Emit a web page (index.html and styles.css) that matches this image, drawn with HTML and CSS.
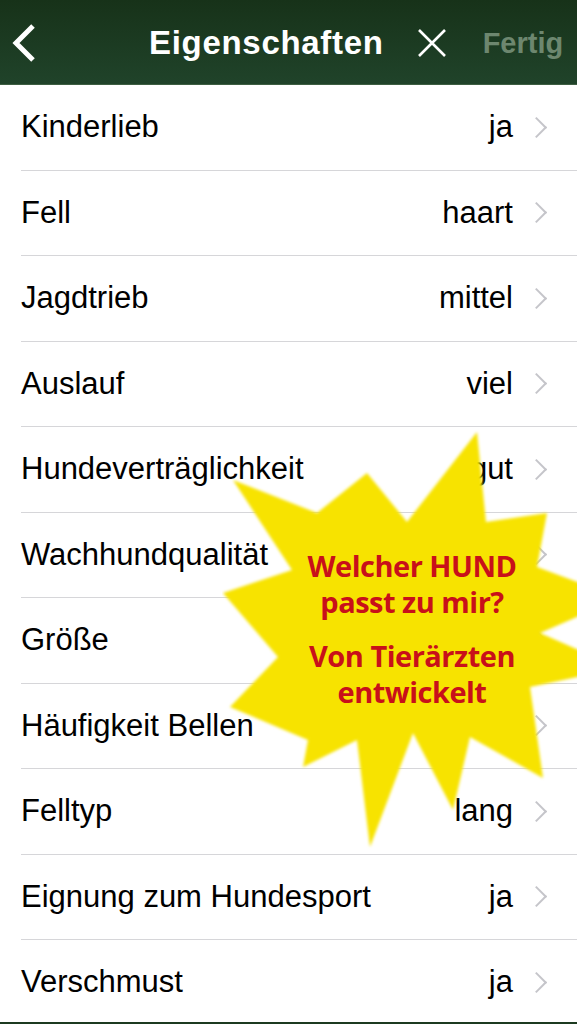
FILE: index.html
```
<!DOCTYPE html>
<html lang="de">
<head>
    <meta charset="UTF-8">
    <meta name="viewport" content="width=device-width, initial-scale=1.0">
    <title>Eigenschaften</title>
    <link rel="stylesheet" href="styles.css">
</head>
<body>
    <div class="wrap">
        <div class="nav">
            <svg class="back" width="26" height="40" viewBox="0 0 26 40">
                <polyline points="21,3 4,20 21,37" fill="none" stroke="#fff" stroke-width="5"/>
            </svg>
            <div class="title">Eigenschaften</div>
            <svg class="close" width="30" height="30" viewBox="0 0 30 30">
                <path d="M2 2 L28 28 M28 2 L2 28" stroke="#fff" stroke-width="2.6"/>
            </svg>
            <div class="done">Fertig</div>
        </div>
        <ul class="list">
            <li><span class="label">Kinderlieb</span><span class="value">ja</span><i class="arrow"></i></li>
            <li><span class="label">Fell</span><span class="value">haart</span><i class="arrow"></i></li>
            <li><span class="label">Jagdtrieb</span><span class="value">mittel</span><i class="arrow"></i></li>
            <li><span class="label">Auslauf</span><span class="value">viel</span><i class="arrow"></i></li>
            <li><span class="label">Hundeverträglichkeit</span><span class="value">gut</span><i class="arrow"></i></li>
            <li><span class="label">Wachhundqualität</span><span class="value"></span><i class="arrow"></i></li>
            <li><span class="label">Größe</span><span class="value"></span><i class="arrow"></i></li>
            <li><span class="label">Häufigkeit Bellen</span><span class="value">wenig</span><i class="arrow"></i></li>
            <li><span class="label">Felltyp</span><span class="value">lang</span><i class="arrow"></i></li>
            <li><span class="label">Eignung zum Hundesport</span><span class="value">ja</span><i class="arrow"></i></li>
            <li><span class="label">Verschmust</span><span class="value">ja</span><i class="arrow"></i></li>
        </ul>
        <div class="bottom-bar"></div>

        <!-- werbe-stern -->
        <div class="star">
            <svg class="star-bg" width="400" height="430" viewBox="222 425 400 430">
                <defs>
                    <filter id="soft"><feGaussianBlur stdDeviation="1.6"/></filter>
                </defs>
                <polygon filter="url(#soft)" fill="#f7e300" points="477,432 486,522 547,513 537,567 620,598 540,633 620,668 530,687 543,778 470,737 453,810 413,733 370,847 357,740 303,767 308,740 230,707 278,657 223,593 292,570 233,480 317,513 367,473 407,522"/>
            </svg>
            <div class="star-text">
                <p>Welcher HUND<br>passt zu mir?</p>
                <p>Von Tierärzten<br>entwickelt</p>
            </div>
        </div>
    </div>
</body>
</html>
```

FILE: styles.css
```
* {
    margin: 0;
    padding: 0;
    list-style: none;
}
body {
    background: #fff;
    font-family: "Liberation Sans", Arial, sans-serif;
}
.wrap {
    width: 577px;
    height: 1024px;
    overflow: hidden;
    position: relative;
}
.nav {
    height: 85px;
    box-sizing: border-box;
    display: flex;
    align-items: center;
    padding-left: 12px;
    padding-top: 2px;
    background: linear-gradient(#173219, #20432a);
    border-bottom: 1px solid #3e5e42;
}
.back {
    display: block;
}
.title {
    margin-left: 111px;
    color: #fff;
    font-size: 33px;
    font-weight: bold;
    letter-spacing: 0.7px;
}
.close {
    display: block;
    margin-left: 33px;
}
.done {
    margin-left: 36px;
    color: #6d876f;
    font-size: 29px;
    font-weight: bold;
}
.list {
    height: 937px;
    overflow: hidden;
}
.list li {
    height: 85.5px;
    box-sizing: border-box;
    margin-left: 21px;
    padding-right: 29px;
    border-bottom: 1.5px solid #d6d6d9;
    display: flex;
    align-items: center;
    font-size: 31px;
    color: #000;
}
.label {
    flex: 1;
}
.arrow {
    width: 13px;
    height: 13px;
    margin-left: 16px;
    margin-right: 4px;
    border-top: 2.5px solid #c5c5ca;
    border-right: 2.5px solid #c5c5ca;
    transform: rotate(45deg);
}
.bottom-bar {
    height: 2px;
    background: #1c3a20;
}
.star {
    position: absolute;
    left: 222px;
    top: 425px;
    width: 400px;
    height: 430px;
}
.star-bg {
    position: absolute;
    left: 0;
    top: 0;
}
.star-text {
    position: relative;
    width: 380px;
    padding-top: 123px;
    text-align: center;
    color: #c8101a;
    font-family: "Open Sans", sans-serif;
    font-weight: bold;
    font-size: 29px;
    line-height: 36px;
    letter-spacing: -0.5px;
}
.star-text p + p {
    margin-top: 18px;
}
```
